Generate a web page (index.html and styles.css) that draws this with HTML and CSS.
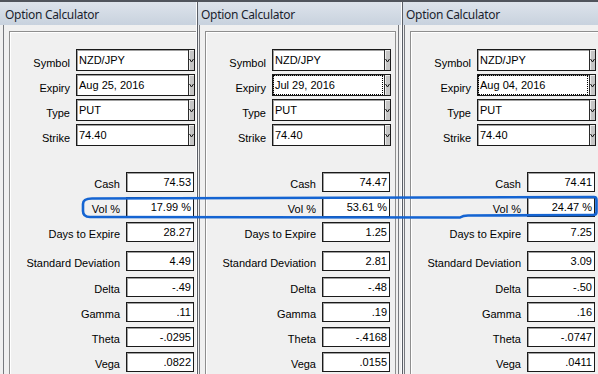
FILE: index.html
```html
<!DOCTYPE html>
<html>
<head>
<meta charset="utf-8">
<link rel="stylesheet" href="styles.css">
</head>
<body>
<div class="desk">
  <section class="win win--first">
    <div class="title">Option Calculator</div>
    <div class="body">
      <div class="frame">
        <div class="panel">
          <div class="dd-list">
            <div class="dd-row"><span class="lbl lbl-s">Symbol</span><div class="dd"><span class="dd-text">NZD/JPY</span><span class="dd-btn"><svg width="5" height="5" viewBox="0 0 5 5"><polyline points="0.5,1 2.5,4 4.5,1" fill="none" stroke="#111" stroke-width="1"/></svg></span></div></div>
            <div class="dd-row"><span class="lbl lbl-s">Expiry</span><div class="dd"><span class="dd-text">Aug 25, 2016</span><span class="dd-btn"><svg width="5" height="5" viewBox="0 0 5 5"><polyline points="0.5,1 2.5,4 4.5,1" fill="none" stroke="#111" stroke-width="1"/></svg></span></div></div>
            <div class="dd-row"><span class="lbl lbl-s">Type</span><div class="dd"><span class="dd-text">PUT</span><span class="dd-btn"><svg width="5" height="5" viewBox="0 0 5 5"><polyline points="0.5,1 2.5,4 4.5,1" fill="none" stroke="#111" stroke-width="1"/></svg></span></div></div>
            <div class="dd-row"><span class="lbl lbl-s">Strike</span><div class="dd"><span class="dd-text">74.40</span><span class="dd-btn"><svg width="5" height="5" viewBox="0 0 5 5"><polyline points="0.5,1 2.5,4 4.5,1" fill="none" stroke="#111" stroke-width="1"/></svg></span></div></div>
          </div>
          <div class="fields">
            <div class="f-row"><span class="lbl lbl-f">Cash</span><span class="val">74.53</span></div>
            <div class="f-row"><span class="lbl lbl-f">Vol %</span><span class="val">17.99 %</span></div>
            <div class="f-row"><span class="lbl lbl-f">Days to Expire</span><span class="val">28.27</span></div>
            <div class="f-row f-row--std"><span class="lbl lbl-f">Standard Deviation</span><span class="val">4.49</span></div>
            <div class="f-row f-row--delta"><span class="lbl lbl-f">Delta</span><span class="val">-.49</span></div>
            <div class="f-row"><span class="lbl lbl-f">Gamma</span><span class="val">.11</span></div>
            <div class="f-row"><span class="lbl lbl-f">Theta</span><span class="val">-.0295</span></div>
            <div class="f-row"><span class="lbl lbl-f">Vega</span><span class="val">.0822</span></div>
          </div>
        </div>
      </div>
    </div>
  </section>

  <section class="win win--mid">
    <div class="title">Option Calculator</div>
    <div class="body">
      <div class="frame">
        <div class="panel">
          <div class="dd-list">
            <div class="dd-row"><span class="lbl lbl-s">Symbol</span><div class="dd"><span class="dd-text">NZD/JPY</span><span class="dd-btn"><svg width="5" height="5" viewBox="0 0 5 5"><polyline points="0.5,1 2.5,4 4.5,1" fill="none" stroke="#111" stroke-width="1"/></svg></span></div></div>
            <div class="dd-row"><span class="lbl lbl-s">Expiry</span><div class="dd"><span class="dd-text dd-text--focus">Jul 29, 2016</span><span class="dd-btn"><svg width="5" height="5" viewBox="0 0 5 5"><polyline points="0.5,1 2.5,4 4.5,1" fill="none" stroke="#111" stroke-width="1"/></svg></span></div></div>
            <div class="dd-row"><span class="lbl lbl-s">Type</span><div class="dd"><span class="dd-text">PUT</span><span class="dd-btn"><svg width="5" height="5" viewBox="0 0 5 5"><polyline points="0.5,1 2.5,4 4.5,1" fill="none" stroke="#111" stroke-width="1"/></svg></span></div></div>
            <div class="dd-row"><span class="lbl lbl-s">Strike</span><div class="dd"><span class="dd-text">74.40</span><span class="dd-btn"><svg width="5" height="5" viewBox="0 0 5 5"><polyline points="0.5,1 2.5,4 4.5,1" fill="none" stroke="#111" stroke-width="1"/></svg></span></div></div>
          </div>
          <div class="fields">
            <div class="f-row"><span class="lbl lbl-f">Cash</span><span class="val">74.47</span></div>
            <div class="f-row"><span class="lbl lbl-f">Vol %</span><span class="val">53.61 %</span></div>
            <div class="f-row"><span class="lbl lbl-f">Days to Expire</span><span class="val">1.25</span></div>
            <div class="f-row f-row--std"><span class="lbl lbl-f">Standard Deviation</span><span class="val">2.81</span></div>
            <div class="f-row f-row--delta"><span class="lbl lbl-f">Delta</span><span class="val">-.48</span></div>
            <div class="f-row"><span class="lbl lbl-f">Gamma</span><span class="val">.19</span></div>
            <div class="f-row"><span class="lbl lbl-f">Theta</span><span class="val">-.4168</span></div>
            <div class="f-row"><span class="lbl lbl-f">Vega</span><span class="val">.0155</span></div>
          </div>
        </div>
      </div>
    </div>
  </section>

  <section class="win win--last">
    <div class="title">Option Calculator</div>
    <div class="body">
      <div class="frame">
        <div class="panel">
          <div class="dd-list">
            <div class="dd-row"><span class="lbl lbl-s">Symbol</span><div class="dd"><span class="dd-text">NZD/JPY</span><span class="dd-btn"><svg width="5" height="5" viewBox="0 0 5 5"><polyline points="0.5,1 2.5,4 4.5,1" fill="none" stroke="#111" stroke-width="1"/></svg></span></div></div>
            <div class="dd-row"><span class="lbl lbl-s">Expiry</span><div class="dd"><span class="dd-text dd-text--focus">Aug 04, 2016</span><span class="dd-btn"><svg width="5" height="5" viewBox="0 0 5 5"><polyline points="0.5,1 2.5,4 4.5,1" fill="none" stroke="#111" stroke-width="1"/></svg></span></div></div>
            <div class="dd-row"><span class="lbl lbl-s">Type</span><div class="dd"><span class="dd-text">PUT</span><span class="dd-btn"><svg width="5" height="5" viewBox="0 0 5 5"><polyline points="0.5,1 2.5,4 4.5,1" fill="none" stroke="#111" stroke-width="1"/></svg></span></div></div>
            <div class="dd-row"><span class="lbl lbl-s">Strike</span><div class="dd"><span class="dd-text">74.40</span><span class="dd-btn"><svg width="5" height="5" viewBox="0 0 5 5"><polyline points="0.5,1 2.5,4 4.5,1" fill="none" stroke="#111" stroke-width="1"/></svg></span></div></div>
          </div>
          <div class="fields">
            <div class="f-row"><span class="lbl lbl-f">Cash</span><span class="val">74.41</span></div>
            <div class="f-row"><span class="lbl lbl-f">Vol %</span><span class="val">24.47 %</span></div>
            <div class="f-row"><span class="lbl lbl-f">Days to Expire</span><span class="val">7.25</span></div>
            <div class="f-row f-row--std"><span class="lbl lbl-f">Standard Deviation</span><span class="val">3.09</span></div>
            <div class="f-row f-row--delta"><span class="lbl lbl-f">Delta</span><span class="val">-.50</span></div>
            <div class="f-row"><span class="lbl lbl-f">Gamma</span><span class="val">.16</span></div>
            <div class="f-row"><span class="lbl lbl-f">Theta</span><span class="val">-.0747</span></div>
            <div class="f-row"><span class="lbl lbl-f">Vega</span><span class="val">.0411</span></div>
          </div>
        </div>
      </div>
    </div>
  </section>

  <svg class="mark" width="598" height="374" viewBox="0 0 598 374">
    <path d="M 92 198.5 L 594 197 Q 596.5 197 596.5 200 L 596.5 212 Q 596.5 215 593 215 L 468 215.5 Q 463 215.5 460 217.5 L 90 217 Q 83 217 83 211 L 83 204 Q 83 198.5 92 198.5 Z" fill="none" stroke="#1464d2" stroke-width="2.6" stroke-linejoin="round"/>
  </svg>
</div>
</body>
</html>
```

FILE: styles.css
```css
html, body {
  margin: 0;
  padding: 0;
  background: #f0f0f0;
}

.desk {
  position: relative;
  display: flex;
  width: 598px;
  height: 374px;
  overflow: hidden;
  font-family: "Liberation Sans", Arial, sans-serif;
  font-size: 11px;
  color: #000;
}

.win {
  flex: none;
  height: 374px;
  overflow: hidden;
  background: #f0f0f0;
  display: flex;
  flex-direction: column;
}

.win--first { width: 196px; }
.win--mid { width: 205px; }
.win--last { width: 197px; }

.title {
  flex: none;
  border-top: 2px solid #50545c;
  background: linear-gradient(#dde3eb, #c8d2de);
  padding-left: 5px;
  padding-top: 5px;
  height: 18px;
  box-sizing: content-box;
  font-family: "Noto Sans", "Open Sans", sans-serif;
  font-size: 12px;
  letter-spacing: -0.3px;
  line-height: 16px;
  color: #1b1f2e;
  white-space: nowrap;
  box-shadow: inset 1px 0 #fdfdfd, inset 2px 0 #5a5e66;
}

.body {
  flex: 1;
  padding-left: 3px;
  box-shadow: inset 1px 0 #fdfdfd, inset 2px 0 #5a5e66;
  background: #f0f0f0;
}

.win--first .title,
.win--first .body {
  box-shadow: none;
}

.frame {
  width: 200px;
  height: 100%;
  box-sizing: border-box;
  border-left: 1px solid #77797e;
  border-right: 1px solid #77797e;
  padding-left: 5px;
  padding-top: 6px;
}

.panel {
  width: 191px;
  height: 400px;
  box-sizing: border-box;
  border: 1px solid #8e8e8e;
  box-shadow: inset 1px 1px 0 #fff;
  padding-top: 17px;
}

.dd-list {
  display: flex;
  flex-direction: column;
  gap: 3px;
}

.dd-row {
  display: flex;
  gap: 6px;
  height: 22px;
}

.lbl {
  flex: none;
  text-align: right;
  align-self: flex-end;
  line-height: 13px;
  padding-bottom: 1px;
  white-space: nowrap;
}

.lbl-s { width: 60px; }
.lbl-f { width: 110px; }

.dd {
  flex: none;
  width: 119px;
  height: 22px;
  box-sizing: border-box;
  display: flex;
  background: #fff;
  border: 1px solid #1a1a1a;
  box-shadow: inset 1px 1px 0 #a0a0a0;
}

.dd-text {
  flex: 1;
  line-height: 20px;
  padding-left: 2px;
  white-space: nowrap;
}

.dd-text--focus {
  outline: 1px dotted #000;
  outline-offset: -1px;
  margin-right: 1px;
}

.dd-btn {
  flex: none;
  width: 6px;
  border-left: 1px solid #2a2a2a;
  background: #c6c6c6;
  box-shadow: inset 1px 1px 0 #ececec;
  display: flex;
  justify-content: center;
  padding-top: 8px;
  box-sizing: border-box;
}

.dd-btn svg {
  display: block;
}

.fields {
  margin-top: 26px;
  display: flex;
  flex-direction: column;
  gap: 5px;
}

.f-row {
  display: flex;
  gap: 6px;
  height: 20px;
}

.f-row--std { margin-top: 4px; }
.f-row--delta { margin-top: 1px; }

.val {
  flex: none;
  width: 68px;
  height: 20px;
  box-sizing: border-box;
  background: #fff;
  border: 1px solid #1a1a1a;
  box-shadow: inset 1px 1px 0 #a0a0a0;
  text-align: right;
  line-height: 18px;
  padding-right: 2px;
  white-space: nowrap;
}

.mark {
  position: absolute;
  left: 0;
  top: 0;
  pointer-events: none;
}
```
